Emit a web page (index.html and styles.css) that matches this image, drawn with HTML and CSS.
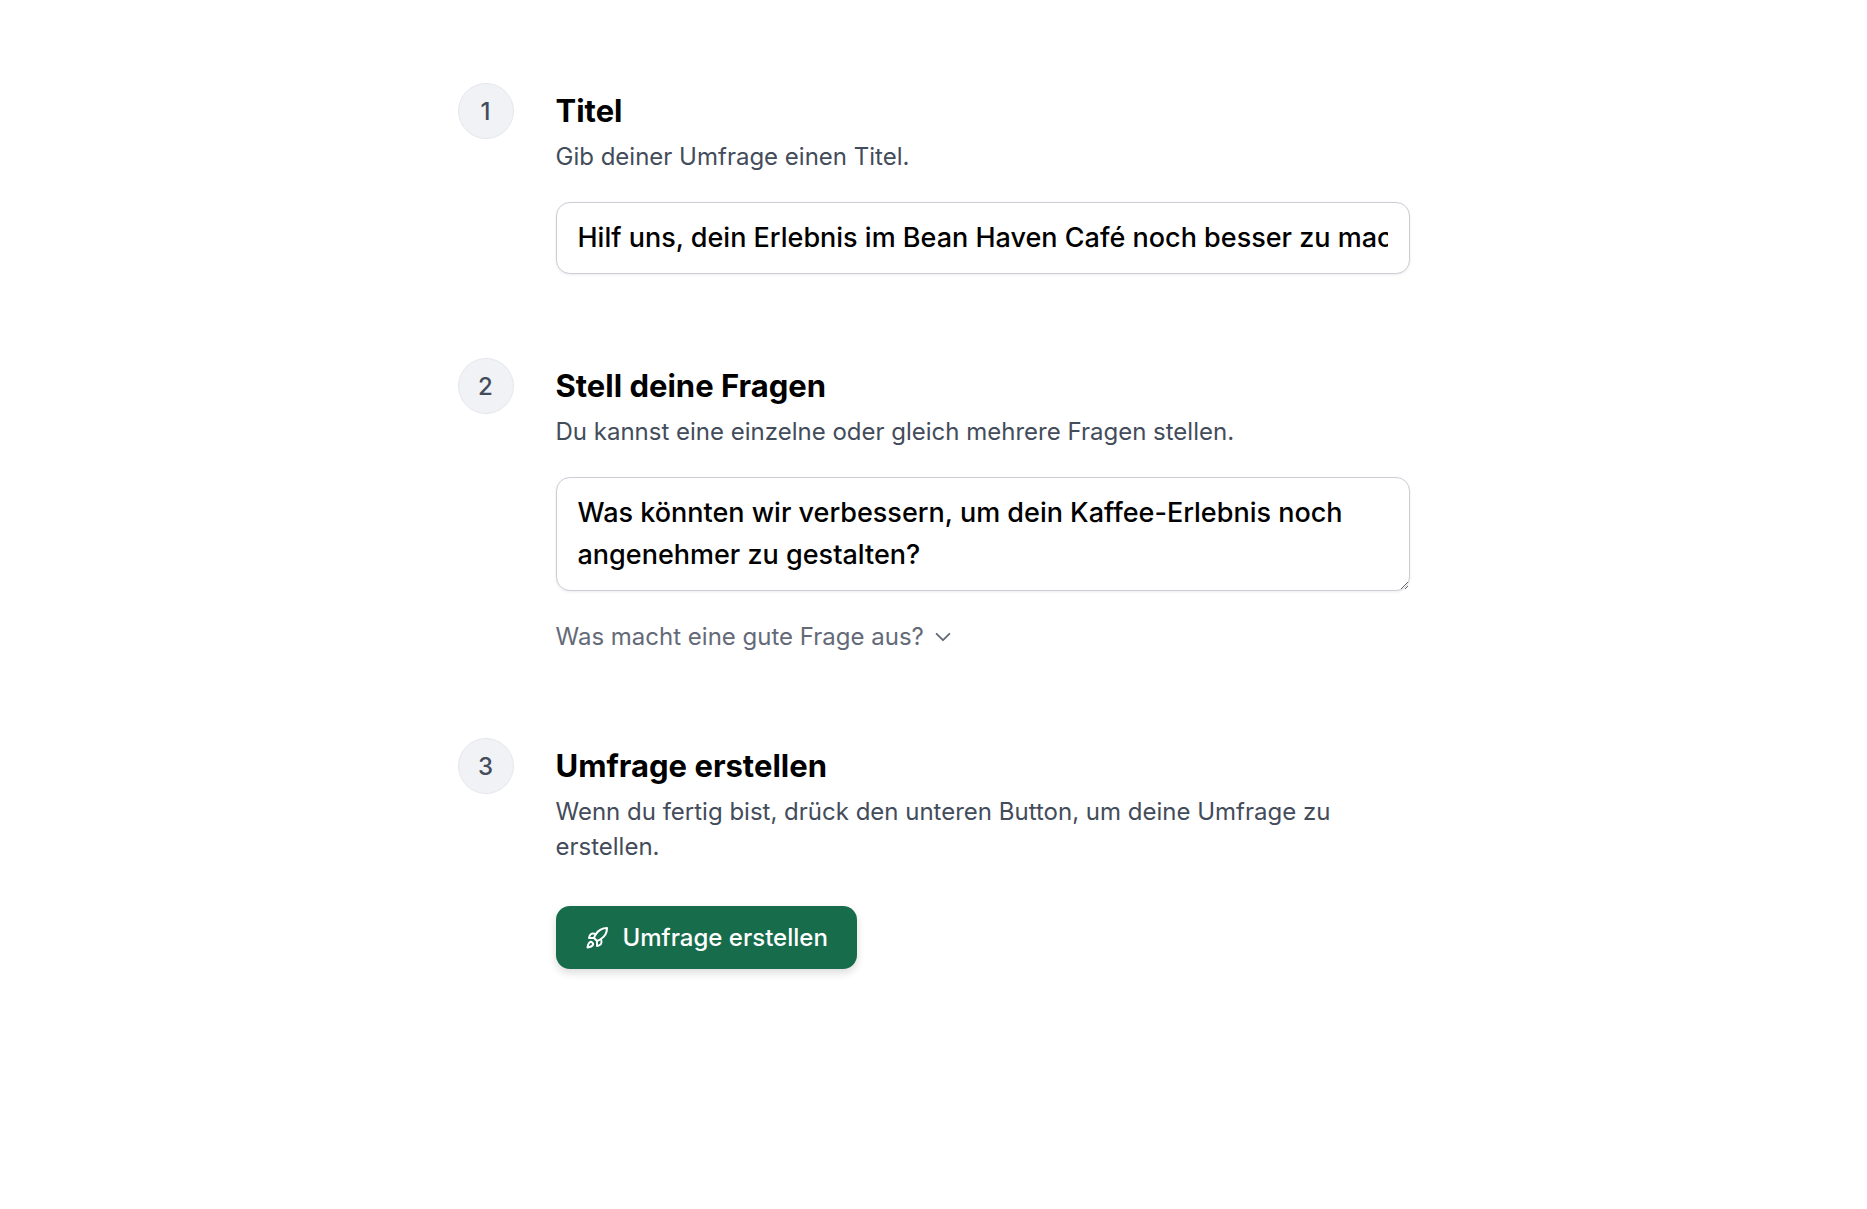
FILE: index.html
```html
<!DOCTYPE html>
<html lang="de">
<head>
<meta charset="utf-8">
<meta name="viewport" content="width=device-width, initial-scale=1">
<title>Umfrage erstellen</title>
<link rel="stylesheet" href="styles.css">
</head>
<body>
<form class="steps">
  <section class="step">
    <span class="step-number">1</span>
    <div class="step-body">
      <h2 class="step-title"><label for="survey-title">Titel</label></h2>
      <p class="step-text">Gib deiner Umfrage einen Titel.</p>
      <input class="field" id="survey-title" type="text" value="Hilf uns, dein Erlebnis im Bean Haven Café noch besser zu machen">
    </div>
  </section>
  <section class="step">
    <span class="step-number">2</span>
    <div class="step-body">
      <h2 class="step-title"><label for="survey-question">Stell deine Fragen</label></h2>
      <p class="step-text">Du kannst eine einzelne oder gleich mehrere Fragen stellen.</p>
      <textarea class="field" id="survey-question" rows="2">Was könnten wir verbessern, um dein Kaffee-Erlebnis noch angenehmer zu gestalten?</textarea>
      <button class="hint" type="button">Was macht eine gute Frage aus?
        <svg class="hint-icon" viewBox="0 0 24 24" aria-hidden="true"><path d="m5 8.500 7 7 7-7"/></svg>
      </button>
    </div>
  </section>
  <section class="step">
    <span class="step-number">3</span>
    <div class="step-body">
      <h2 class="step-title">Umfrage erstellen</h2>
      <p class="step-text">Wenn du fertig bist, drück den unteren Button, um deine Umfrage zu erstellen.</p>
      <button class="submit" type="submit">
        <svg class="submit-icon" viewBox="0 0 24 24" aria-hidden="true"><path d="M4.500 16.500c-1.500 1.260-2 5-2 5s3.740-.5 5-2c.71-.84.7-2.130-.09-2.910a2.180 2.180 0 0 0-2.910-.09z"/><path d="m12 15-3-3a22 22 0 0 1 2-3.950A12.880 12.880 0 0 1 22 2c0 2.720-.78 7.500-6 11a22.350 22.350 0 0 1-4 2z"/><path d="M9 12H4s.55-3.030 2-4c1.620-1.080 5 0 5 0"/><path d="M12 15v5s3.030-.55 4-2c1.080-1.620 0-5 0-5"/></svg>
        Umfrage erstellen
      </button>
    </div>
  </section>
</form>
</body>
</html>
```
FILE: styles.css
```css
*,
*::before,
*::after {
  box-sizing: border-box;
}

body {
  margin: 0;
  background: #fff;
  color: #000;
  font: 24px/35px Inter, "Noto Sans", sans-serif;
}

button,
input,
textarea {
  margin: 0;
  font: inherit;
  color: inherit;
}

.steps {
  display: flex;
  flex-direction: column;
  gap: 84px;
  max-width: 952px;
  margin: 0 auto;
  padding: 83px 16px;
  box-sizing: content-box;
}

.step {
  display: flex;
  gap: 42px;
}

.step-number {
  display: flex;
  flex: none;
  align-items: center;
  justify-content: center;
  width: 56px;
  height: 56px;
  border: 1px solid #e5e7eb;
  border-radius: 50%;
  background: #f1f2f6;
  color: #434c5a;
  font-weight: 500;
}

.step-body {
  display: flex;
  flex: 1;
  flex-direction: column;
  align-items: flex-start;
  min-width: 0;
}

.step-title {
  margin: 0;
  font-size: 31px;
  font-weight: 700;
  line-height: 56px;
}

.step-text {
  margin: 0;
  color: #434c5a;
}

.field {
  display: block;
  width: 100%;
  margin-top: 28px;
  padding: 14px 21px;
  border: 1px solid #cbced6;
  border-radius: 14px;
  background: #fff;
  box-shadow: 0 1px 3px rgb(0 0 0 / 8%);
  font-size: 27px;
  font-weight: 450;
  line-height: 42px;
}

.hint {
  display: flex;
  align-items: center;
  gap: 8px;
  margin-top: 28px;
  padding: 0;
  border: 0;
  background: none;
  color: #646a78;
}

.hint-icon,
.submit-icon {
  fill: none;
  stroke: currentColor;
  stroke-width: 2;
  stroke-linecap: round;
  stroke-linejoin: round;
}

.hint-icon {
  width: 22px;
  height: 22px;
}

.submit {
  display: flex;
  align-items: center;
  gap: 14px;
  margin-top: 42px;
  padding: 14px 29px;
  border: 0;
  border-radius: 14px;
  background: #176c4c;
  box-shadow: 0 4px 8px rgb(0 0 0 / 14%);
  color: #fff;
  font-weight: 500;
}

.submit-icon {
  width: 24px;
  height: 24px;
}
```
